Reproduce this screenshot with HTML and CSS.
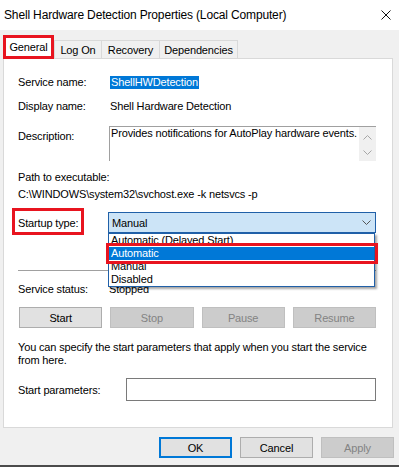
FILE: index.html
```html
<!DOCTYPE html>
<html>
<head>
<meta charset="utf-8">
<link rel="stylesheet" href="styles.css">
</head>
<body>
<div class="window">
  <div class="titlebar">
    <span class="title">Shell Hardware Detection Properties (Local Computer)</span>
    <svg class="close" width="10" height="10" viewBox="0 0 10 10"><path d="M0.5 0.5L9.5 9.5M9.5 0.5L0.5 9.5" stroke="#111" stroke-width="1" fill="none"/></svg>
  </div>
  <div class="tabs">
    <div class="tab active">General</div>
    <div class="tab t-logon">Log On</div>
    <div class="tab t-recovery">Recovery</div>
    <div class="tab t-deps">Dependencies</div>
  </div>
  <div class="panel">
    <div class="row r-name">
      <span class="label">Service name:</span>
      <span class="selected-text">ShellHWDetection</span>
    </div>
    <div class="row r-display">
      <span class="label">Display name:</span>
      <span>Shell Hardware Detection</span>
    </div>
    <div class="r-desc">
      <span class="label desc-label">Description:</span>
      <div class="textbox">
        <span class="tb-text">Provides notifications for AutoPlay hardware events.</span>
        <div class="tb-scroll">
          <svg width="9" height="5" viewBox="0 0 9 5"><path d="M0.5 4.5L4.5 0.5L8.5 4.5" stroke="#a6a6a6" fill="none"/></svg>
          <svg width="9" height="5" viewBox="0 0 9 5"><path d="M0.5 0.5L4.5 4.5L8.5 0.5" stroke="#a6a6a6" fill="none"/></svg>
        </div>
      </div>
    </div>
    <div class="line r-path-label">Path to executable:</div>
    <div class="line r-path">C:\WINDOWS\system32\svchost.exe -k netsvcs -p</div>
    <div class="r-startup">
      <span class="label">Startup type:</span>
      <span class="mark mark-label"></span>
      <div class="combo">
        <span>Manual</span>
        <svg width="9" height="5" viewBox="0 0 9 5"><path d="M0.5 0.5L4.5 4.5L8.5 0.5" stroke="#555" fill="none"/></svg>
        <div class="droplist">
          <div class="item">Automatic (Delayed Start)</div>
          <div class="item sel">Automatic</div>
          <div class="item">Manual</div>
          <div class="item">Disabled</div>
          <span class="mark mark-item"></span>
        </div>
      </div>
    </div>
    <div class="separator"></div>
    <div class="row r-status">
      <span class="label">Service status:</span>
      <span class="status">Stopped</span>
    </div>
    <div class="svc-buttons">
      <button class="btn">Start</button>
      <button class="btn disabled">Stop</button>
      <button class="btn disabled">Pause</button>
      <button class="btn disabled">Resume</button>
    </div>
    <p class="info">You can specify the start parameters that apply when you start the service from here.</p>
    <div class="r-params">
      <span class="label params-label">Start parameters:</span>
      <div class="input"></div>
    </div>
  </div>
  <div class="footer">
    <button class="btn fbtn default">OK</button>
    <button class="btn fbtn">Cancel</button>
    <button class="btn fbtn disabled">Apply</button>
  </div>
</div>
</body>
</html>
```
FILE: styles.css
```css
html, body {
  margin: 0;
  padding: 0;
}
body {
  width: 399px;
  height: 467px;
  overflow: hidden;
  background: #f0f0f0;
  font-family: "Liberation Sans", Arial, sans-serif;
  font-size: 11px;
  letter-spacing: -0.15px;
  color: #000;
}
.window {
  height: 467px;
  box-sizing: border-box;
  border-bottom: 2px solid #4b4b4b;
  display: flex;
  flex-direction: column;
}
.titlebar {
  flex: none;
  height: 30px;
  background: #fff;
  display: flex;
  align-items: center;
  justify-content: space-between;
  padding: 0 8px 0 4px;
}
.title {
  font-size: 12px;
}
.tabs {
  flex: none;
  display: flex;
  align-items: flex-end;
  height: 23px;
  margin: 5px 0 0 3px;
  position: relative;
  z-index: 2;
}
.tab {
  box-sizing: border-box;
  height: 18px;
  border: 1px solid #d9d9d9;
  border-bottom: none;
  display: flex;
  align-items: center;
  justify-content: center;
  background: #f0f0f0;
}
.tab.active {
  width: 51px;
  height: 24px;
  margin-bottom: -1px;
  background: #fff;
  border: 3px solid #e8141f;
  padding-bottom: 1px;
}
.t-logon { width: 48px; }
.t-recovery { width: 59px; margin-left: -1px; }
.t-deps { width: 79px; margin-left: -1px; }
.panel {
  flex: none;
  height: 370px;
  box-sizing: border-box;
  margin: 0 6px 0 3px;
  background: #fff;
  border: 1px solid #d9d9d9;
  padding: 0 16px 0 14px;
  position: relative;
  z-index: 1;
}
.row {
  display: flex;
  align-items: center;
  height: 14px;
}
.label {
  flex: none;
  width: 92px;
}
.r-name { margin-top: 16px; }
.selected-text {
  background: #0078d7;
  color: #fff;
  line-height: 13px;
  padding: 0 1px;
}
.r-display { margin-top: 10px; }
.r-desc {
  display: flex;
  align-items: flex-start;
  margin-top: 13px;
}
.desc-label {
  line-height: 14px;
  padding-top: 3px;
}
.textbox {
  display: flex;
  width: 267px;
  height: 35px;
  box-sizing: border-box;
  margin-left: -1px;
  border-left: 1px solid #a0a0a0;
  border-top: 1px solid #a0a0a0;
}
.tb-text {
  flex: 1;
  padding-left: 1px;
  line-height: 13px;
}
.tb-scroll {
  width: 17px;
  background: #f0f0f0;
  display: flex;
  flex-direction: column;
  align-items: center;
  justify-content: space-between;
  padding: 8px 0 6px;
  box-sizing: border-box;
}
.line {
  line-height: 14px;
}
.r-path-label { margin-top: 9px; }
.r-path { margin-top: 3px; }
.r-startup {
  position: relative;
  display: flex;
  align-items: center;
  margin-top: 11px;
  height: 21px;
}
.mark {
  position: absolute;
  box-sizing: border-box;
  border: 3px solid #e8141f;
}
.mark-label {
  left: -6px;
  top: -4px;
  width: 72px;
  height: 27px;
}
.combo {
  position: relative;
  box-sizing: border-box;
  width: 268px;
  height: 21px;
  margin-left: -2px;
  border: 1px solid #2060a8;
  background: #cce4f7;
  display: flex;
  align-items: center;
  justify-content: space-between;
  padding: 0 4px 0 3px;
}
.droplist {
  position: absolute;
  top: 20px;
  left: -1px;
  width: 267px;
  box-sizing: border-box;
  border: 1px solid #2060a8;
  background: #fff;
  box-shadow: 2px 2px 2px rgba(0, 0, 0, 0.35);
  z-index: 5;
}
.item {
  height: 13px;
  line-height: 13px;
  padding-left: 2px;
  white-space: nowrap;
}
.item.sel {
  background: #0078d7;
  color: #fff;
}
.mark-item {
  left: -3px;
  top: 9px;
  width: 272px;
  height: 21px;
}
.separator {
  margin-top: 37px;
  height: 1px;
  background: #a0a0a0;
}
.r-status { margin-top: 11px; }
.status { margin-left: -1px; }
.svc-buttons {
  display: grid;
  grid-template-columns: repeat(4, 1fr);
  gap: 8px;
  margin: 11px 0 0 1px;
}
.btn {
  font-family: inherit;
  font-size: 11px;
  letter-spacing: -0.15px;
  color: #000;
  height: 21px;
  box-sizing: border-box;
  border: 1px solid #adadad;
  background: #e1e1e1;
  padding: 0;
  margin: 0;
}
.btn.disabled {
  background: #cccccc;
  border-color: #bfbfbf;
  color: #838383;
}
.btn.default {
  border: 2px solid #0078d7;
}
.info {
  margin: 13px 0 0;
  line-height: 13px;
}
.r-params {
  display: flex;
  align-items: center;
  margin-top: 11px;
}
.params-label {
  width: 108px;
}
.input {
  flex: 1;
  height: 23px;
  box-sizing: border-box;
  border: 1px solid #7a7a7a;
  background: #fff;
}
.footer {
  display: flex;
  justify-content: flex-end;
  gap: 8px;
  margin: 9px 5px 0 0;
}
.fbtn {
  width: 73px;
}
```
